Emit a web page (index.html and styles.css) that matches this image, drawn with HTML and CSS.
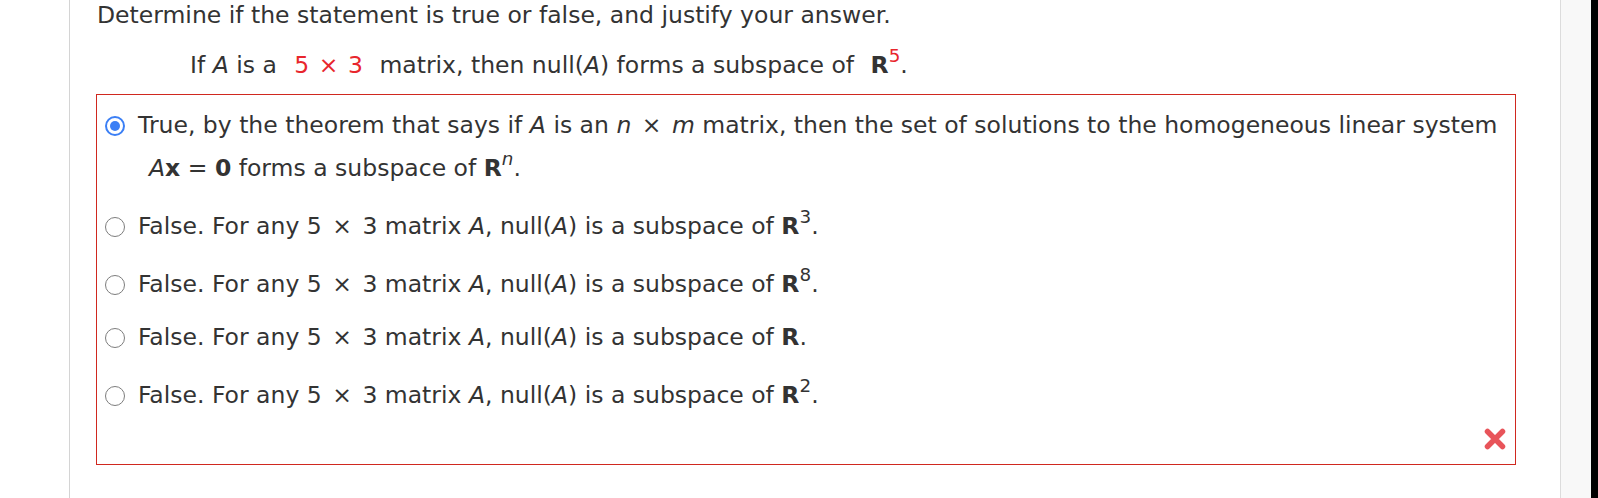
FILE: index.html
```html
<!DOCTYPE html>
<html>
<head>
<meta charset="utf-8">
<link rel="stylesheet" href="styles.css">
</head>
<body>
<div class="page">
  <div class="gutter"></div>
  <main class="content">
    <p class="title">Determine if the statement is true or false, and justify your answer.</p>
    <p class="statement">If <i>A</i> is a <span class="red num">5 × 3</span> matrix, then null(<i>A</i>) forms a subspace of <b class="bb">R</b><sup class="red">5</sup>.</p>
    <div class="answer-box">
      <div class="options">
        <div class="option">
          <span class="radio checked"></span>
          <div class="opt-text">True, by the theorem that says if <i>A</i> is an <span class="m"><i>n</i> × <i>m</i></span> matrix, then the set of solutions to the homogeneous linear system <span class="nl"><i>A</i><b>x</b> = <b>0</b> forms a subspace of <b>R</b><sup><i>n</i></sup>.</span></div>
        </div>
        <div class="option raised">
          <span class="radio"></span>
          <div class="opt-text">False. For any <span class="m">5 × 3</span> matrix <i>A</i>, null(<i>A</i>) is a subspace of <b>R</b><sup>3</sup>.</div>
        </div>
        <div class="option raised">
          <span class="radio"></span>
          <div class="opt-text">False. For any <span class="m">5 × 3</span> matrix <i>A</i>, null(<i>A</i>) is a subspace of <b>R</b><sup>8</sup>.</div>
        </div>
        <div class="option">
          <span class="radio"></span>
          <div class="opt-text">False. For any <span class="m">5 × 3</span> matrix <i>A</i>, null(<i>A</i>) is a subspace of <b>R</b>.</div>
        </div>
        <div class="option raised">
          <span class="radio"></span>
          <div class="opt-text">False. For any <span class="m">5 × 3</span> matrix <i>A</i>, null(<i>A</i>) is a subspace of <b>R</b><sup>2</sup>.</div>
        </div>
      </div>
      <div class="mark">
        <svg width="24" height="24" viewBox="0 0 24 24"><path d="M4.5 4.5 L19.5 19.5 M19.5 4.5 L4.5 19.5" stroke="#e8545a" stroke-width="5.5" stroke-linecap="round"/></svg>
      </div>
    </div>
  </main>
  <div class="sidebar"></div>
  <div class="edge"></div>
</div>
</body>
</html>
```
FILE: styles.css
```css
html, body {
  margin: 0;
  padding: 0;
  background: #fff;
}
body {
  font-family: "DejaVu Sans", Verdana, sans-serif;
  color: #333;
  font-size: 23.5px;
}
.page {
  display: flex;
  height: 498px;
  overflow: hidden;
}
.gutter {
  width: 69px;
  flex: none;
  border-right: 1px solid #d4d4d4;
}
.content {
  width: 1490px;
  flex: none;
  padding-left: 26px;
  box-sizing: border-box;
}
.title {
  margin: 0;
  padding-left: 1px;
  line-height: 30px;
}
.statement {
  margin: 20px 0 0 0;
  padding-left: 94px;
  line-height: 30px;
}
.red { color: #e8262d; }
.num {
  margin: 0 9px 0 10px;
  word-spacing: 2px;
}
.m { word-spacing: 3px; }
.bb { margin-left: 9px; }
sup {
  font-size: 0.78em;
  line-height: 0;
  vertical-align: 0.58em;
}
.answer-box {
  margin-top: 14px;
  width: 1420px;
  height: 371px;
  box-sizing: border-box;
  border: 1px solid #d0281f;
  padding: 9px 8px 0 6px;
  display: flex;
  flex-direction: column;
}
.options {
  display: flex;
  flex-direction: column;
  gap: 10px;
}
.option {
  display: flex;
  align-items: flex-start;
  line-height: 43px;
}
.option.raised {
  padding-top: 5px;
}
.radio {
  flex: none;
  width: 20px;
  height: 20px;
  margin: 12px 13px 0 2px;
  border-radius: 50%;
  border: 1.5px solid #7d7d7d;
  box-sizing: border-box;
  background: #fff;
}
.radio.checked {
  border: 2px solid #3b7ff5;
  position: relative;
}
.radio.checked::after {
  content: "";
  position: absolute;
  left: 3px;
  top: 3px;
  width: 10px;
  height: 10px;
  border-radius: 50%;
  background: #3b7ff5;
}
.opt-text {
  flex: 1;
}
.nl {
  display: block;
  padding-left: 11px;
}
.mark {
  margin-top: auto;
  margin-bottom: 13px;
  display: flex;
  justify-content: flex-end;
}
.sidebar {
  width: 30px;
  flex: none;
  background: #f8f8f8;
  border-left: 1px solid #dcdcdc;
}
.edge {
  flex: 1;
  background: #000;
}
```
